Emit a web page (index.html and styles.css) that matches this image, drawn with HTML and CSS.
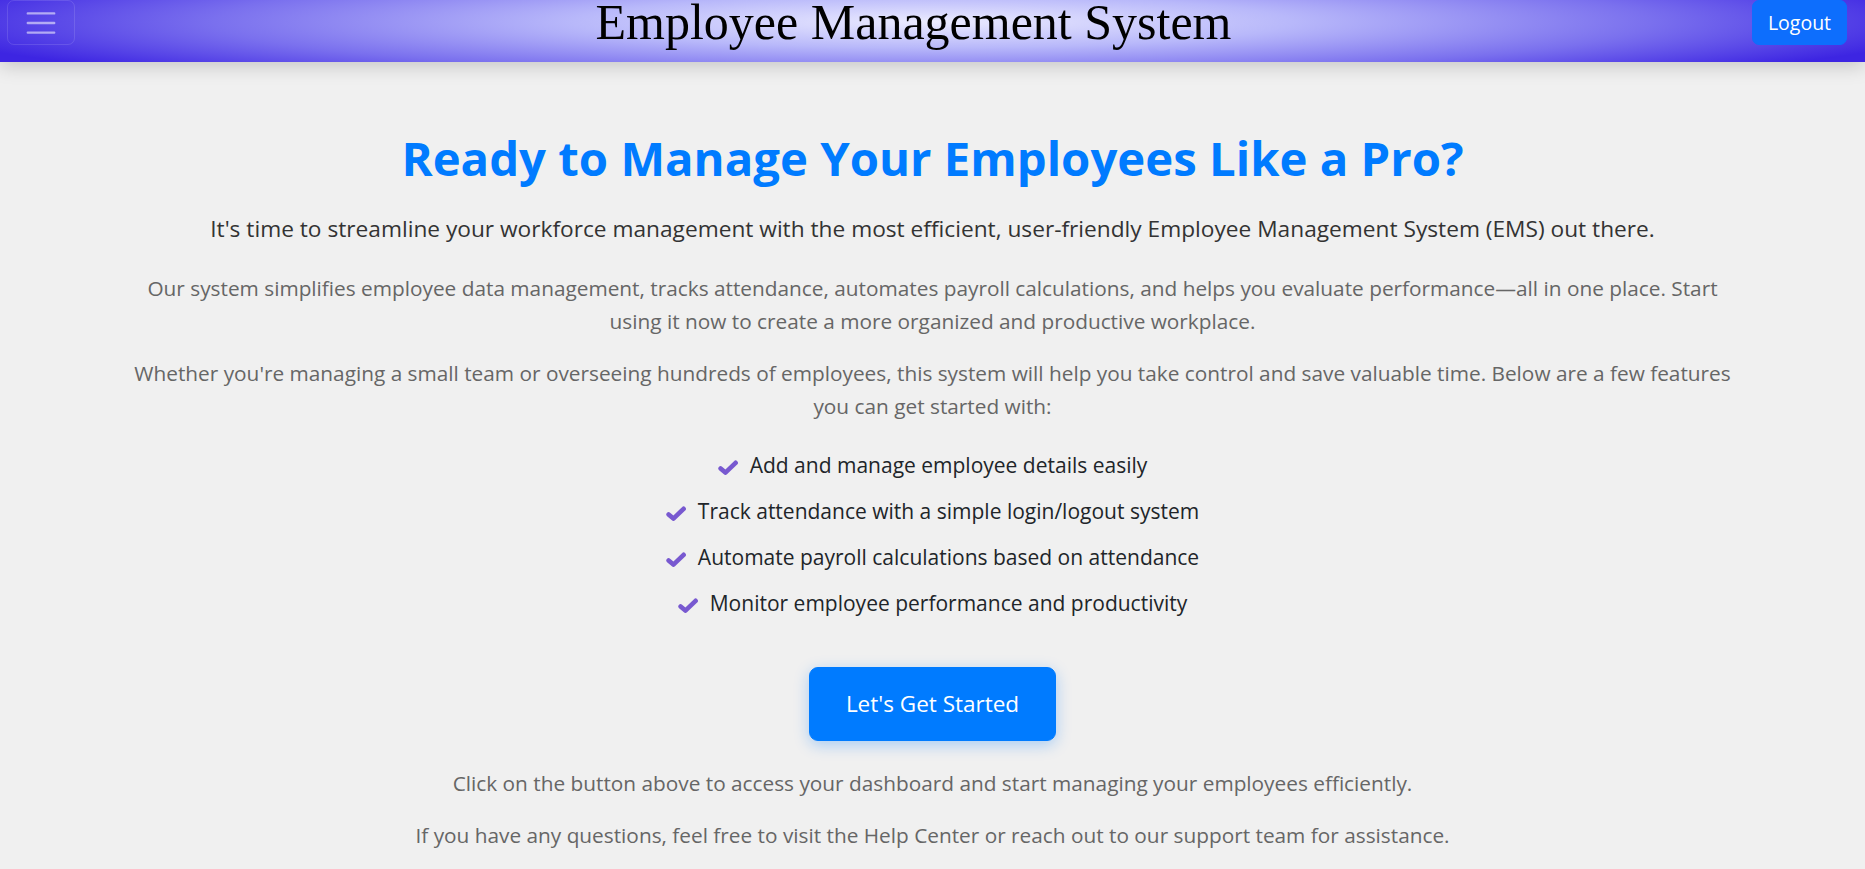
FILE: index.html
```html
<!DOCTYPE html>
<html lang="en">
<head>
<meta charset="utf-8">
<title>Employee Management System</title>
<link rel="stylesheet" href="styles.css">
</head>
<body>
<header class="topbar">
  <button class="toggler" type="button" aria-label="Menu">
    <svg class="toggler-icon" viewBox="0 0 30 30" width="36" height="36"><path d="M4 7h22M4 15h22M4 23h22" stroke="rgba(255,255,255,0.55)" stroke-width="2" stroke-linecap="round" fill="none"/></svg>
  </button>
  <h1 class="brand">Employee Management System</h1>
  <button class="logout" type="button">Logout</button>
</header>

<main class="container">
  <h2 class="hero-title">Ready to Manage Your Employees Like a Pro?</h2>
  <p class="lead-text">It's time to streamline your workforce management with the most efficient, user-friendly Employee Management System (EMS) out there.</p>
  <p class="muted">Our system simplifies employee data management, tracks attendance, automates payroll calculations, and helps you evaluate performance—all in one place. Start using it now to create a more organized and productive workplace.</p>
  <p class="muted">Whether you're managing a small team or overseeing hundreds of employees, this system will help you take control and save valuable time. Below are a few features you can get started with:</p>
  <ul class="features">
    <li><svg class="check" viewBox="0 0 20 15" width="20" height="15"><path d="M2.6 8.4L7.4 12.6L17.6 2.8"/></svg>Add and manage employee details easily</li>
    <li><svg class="check" viewBox="0 0 20 15" width="20" height="15"><path d="M2.6 8.4L7.4 12.6L17.6 2.8"/></svg>Track attendance with a simple login/logout system</li>
    <li><svg class="check" viewBox="0 0 20 15" width="20" height="15"><path d="M2.6 8.4L7.4 12.6L17.6 2.8"/></svg>Automate payroll calculations based on attendance</li>
    <li><svg class="check" viewBox="0 0 20 15" width="20" height="15"><path d="M2.6 8.4L7.4 12.6L17.6 2.8"/></svg>Monitor employee performance and productivity</li>
  </ul>
  <div class="cta-wrap"><button class="cta" type="button">Let's Get Started</button></div>
  <p class="muted after-cta">Click on the button above to access your dashboard and start managing your employees efficiently.</p>
  <p class="muted">If you have any questions, feel free to visit the Help Center or reach out to our support team for assistance.</p>
</main>
</body>
</html>
```
FILE: styles.css
```css
* { box-sizing: border-box; }
html, body { margin: 0; padding: 0; }
body {
  background: #f0f0f0;
  font-family: "Open Sans", "Noto Sans", sans-serif;
  color: #212529;
  overflow: hidden;
}
.topbar {
  height: 62px;
  display: flex;
  justify-content: space-between;
  align-items: flex-start;
  padding: 0 18px 0 7px;
  background: radial-gradient(ellipse 55% 120% at 50% 35%, #ebebff 0%, #b8b8fa 35%, #7a70ee 70%, #3d25e2 100%);
  box-shadow: 0 4px 18px rgba(0,0,0,0.18);
  position: relative;
  z-index: 1;
}
.toggler {
  width: 68px;
  height: 45px;
  padding: 0;
  display: flex;
  align-items: center;
  justify-content: center;
  background: transparent;
  border: 1px solid rgba(255,255,255,0.12);
  border-radius: 7px;
}
.toggler-icon { display: block; }
.brand {
  margin: 0;
  font-family: "Liberation Serif", "Times New Roman", serif;
  font-weight: 400;
  font-size: 50px;
  line-height: 45px;
  color: #000;
}
.logout {
  height: 45px;
  width: 95px;
  padding: 0;
  background: #0d6efd;
  color: #fff;
  border: 1px solid #0d6efd;
  border-radius: 7px;
  font-family: "Open Sans", "Noto Sans", sans-serif;
  font-size: 19.5px;
}
.container {
  width: 1610px;
  margin: 0 auto;
  text-align: center;
  padding-top: 68px;
}
.hero-title {
  margin: 0 0 26px;
  color: #007bff;
  font-size: 47.3px;
  font-weight: 700;
  line-height: 56px;
}
.lead-text {
  margin: 0 0 26px;
  font-size: 22.7px;
  line-height: 34px;
  color: #333;
}
.muted {
  margin: 0 0 19px;
  font-size: 20.8px;
  line-height: 33px;
  color: #666;
}
.features {
  list-style: none;
  padding: 0;
  margin: 26px 0 48px;
}
.features li {
  font-size: 21px;
  line-height: 32px;
  margin-bottom: 14px;
  color: #212529;
}
.check {
  fill: none;
  stroke: #7859d0;
  stroke-width: 4.6;
  stroke-linecap: round;
  stroke-linejoin: round;
  margin-right: 12px;
  vertical-align: -2px;
}
.cta-wrap {
  display: flex;
  justify-content: center;
}
.cta {
  padding: 18px 36px;
  background: #007bff;
  color: #fff;
  border: 1px solid #007bff;
  border-radius: 9px;
  font-family: "Open Sans", "Noto Sans", sans-serif;
  font-size: 22.5px;
  line-height: 36px;
  box-shadow: 0 4px 15px rgba(0,123,255,0.3);
}
.after-cta { margin-top: 26px; }
```
